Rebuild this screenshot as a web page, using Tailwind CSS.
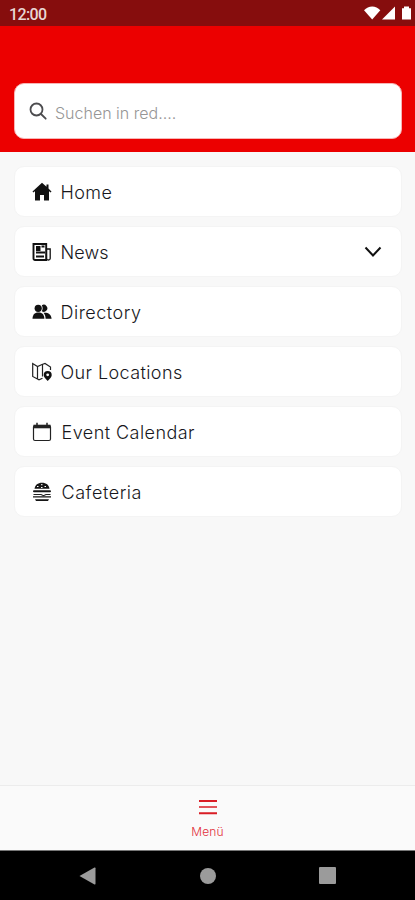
<!DOCTYPE html>
<html lang="de">
<head>
<meta charset="utf-8">
<title>Menü</title>
<script src="https://cdn.jsdelivr.net/npm/@tailwindcss/browser@4"></script>
</head>
<body class="w-[415px] h-[900px] overflow-hidden flex flex-col bg-[#f8f8f8] font-['Inter','Liberation_Sans',sans-serif]">
  <!-- Status bar -->
  <div class="h-[26px] shrink-0 bg-[#860d0d] flex items-center justify-between pl-[9px] pr-[3px]">
    <span class="font-[Roboto,sans-serif] text-[16px] tracking-[-0.6px] leading-none font-medium text-[#e8d6d4] pt-[3px]">12:00</span>
    <svg class="w-[48px] h-[14px]" viewBox="0 0 48 14" fill="#fff">
      <path d="M0 4.2C4.5-.9 12-.9 16.3 4.2L8.2 13.5Z"/>
      <path d="M31 0.500V13.500H18Z"/>
      <path d="M38 2.200h2V.5h5v1.700h2v11.300h-9Z"/>
    </svg>
  </div>
  <!-- Header with search -->
  <header class="h-[126px] shrink-0 bg-[#ec0000] pt-[57px] pl-[14px] pr-[13px]">
    <div class="h-[56px] rounded-[10px] bg-white flex items-center pl-[14px] border border-[#f7b5b5]">
      <svg class="w-[18px] h-[18px] shrink-0" viewBox="0 0 18 18" fill="none" stroke="#4c4c4f" stroke-width="1.8" stroke-linecap="round"><circle cx="7.500" cy="7.500" r="6"/><path d="M12 12l4.700 4.700"/></svg>
      <span class="ml-[8px] pt-[3px] text-[16px] leading-none font-light text-[#969696] whitespace-nowrap">Suchen in red....</span>
    </div>
  </header>
  <!-- Navigation list -->
  <main class="flex-1 pl-[14px] pr-[13px] pt-[14px] flex flex-col gap-[9px] text-[18px] leading-none font-light text-[#17171c] tracking-[0.4px]">
    <div class="h-[51px] rounded-[10px] bg-white border border-[#f4f4f4] flex items-center pl-[17px] pr-[19px]">
      <svg class="w-[20px] h-[20px]" viewBox="0 0 20 20" fill="#111"><path d="M10 .8L.5 9.500l.8 1L3 9.200V18.500h5V13h4v5.500h5V9.200l1.700 1.300.8-1L16.500 6.600V2.500h-2v2.300Z"/></svg>
      <span class="ml-[8.5px] pt-[2px]">Home</span>
    </div>
    <div class="h-[51px] rounded-[10px] bg-white border border-[#f4f4f4] flex items-center pl-[17px] pr-[19px]">
      <svg class="w-[20px] h-[20px]" viewBox="0 0 20 20" fill="none" stroke="#111"><path d="M1.500 2h12.700v16H3a1.500 1.500 0 0 1-1.500-1.500Z" stroke-width="1.900"/><path d="M14.500 7h3.700v9.500c0 2-3.700 2-3.700 0Z" stroke-width="1.300"/><path d="M4 4h4.500v5H4Z" fill="#111" stroke="none"/><path d="M9.500 4.500h3M4 10.500h9M4 14.500h8" stroke-width="1.800"/></svg>
      <span class="ml-[8.5px] pt-[2px] tracking-[0.1px]">News</span>
      <svg class="ml-auto w-[18px] h-[12px]" viewBox="0 0 18 12" fill="none" stroke="#111" stroke-width="2"><path d="M1.500 1.500L9 9.500l7.500-8"/></svg>
    </div>
    <div class="h-[51px] rounded-[10px] bg-white border border-[#f4f4f4] flex items-center pl-[17px] pr-[19px]">
      <svg class="w-[20px] h-[20px]" viewBox="0 0 20 20" fill="#111"><circle cx="6.200" cy="6.300" r="3.600"/><path d="M.5 16.700C.8 12 3.200 10.600 6.500 10.600s5.500 1.400 5.900 6.100Z"/><path d="M9.800 3.200a3.600 3.600 0 1 1 0 6.100c1.100-2 1.100-4.100 0-6.100ZM11.500 10.700c4.900-.3 7.600 1.400 8.100 6h-6c-.1-2.700-.8-4.600-2.100-6Z"/></svg>
      <span class="ml-[8.5px] pt-[2px] tracking-[0.5px]">Directory</span>
    </div>
    <div class="h-[51px] rounded-[10px] bg-white border border-[#f4f4f4] flex items-center pl-[17px] pr-[19px]">
      <svg class="w-[20px] h-[20px]" viewBox="0 0 20 20" fill="none" stroke="#222" stroke-width="1.200"><path d="M10.500 16.200L7 17.800 5.500 17 .7 14.500V1.500L5.500 4.500 10 2.500l3-1 5.500 3.500v3M5.500 4.500v12M10.500 2.500v12"/><path d="M15.700 19c-3-3-4-4.200-4-6a4 4 0 0 1 8 0c0 1.800-1 3-4 6Z" fill="#111" stroke="none"/><circle cx="15.700" cy="12.800" r="1.400" fill="#fff" stroke="none"/></svg>
      <span class="ml-[8.5px] pt-[2px]">Our Locations</span>
    </div>
    <div class="h-[51px] rounded-[10px] bg-white border border-[#f4f4f4] flex items-center pl-[17px] pr-[19px]">
      <svg class="w-[20px] h-[20px]" viewBox="0 0 20 20" fill="none" stroke="#222"><rect x="1.500" y="3.500" width="17" height="15" rx="1.500" stroke-width="1.200"/><path d="M1.500 4.500h17" stroke-width="3.600"/><path d="M5 .8v3M15 .8v3" stroke-width="1.500"/></svg>
      <span class="ml-[9.500px] pt-[2px] tracking-[0.45px]">Event Calendar</span>
    </div>
    <div class="h-[51px] rounded-[10px] bg-white border border-[#f4f4f4] flex items-center pl-[17px] pr-[19px]">
      <svg class="w-[20px] h-[20px]" viewBox="0 0 20 20" fill="#161616"><path d="M2.500 6.800C3 3 5.800.8 10 .8s7 2.200 7.500 6Z"/><path d="M5 4.500h1.500M9 2.700h1.500M12.500 4.500H14M9 5.500h1.500" stroke="#fff"/><rect x="1" y="8.300" width="18" height="2" rx="1"/><path d="M1.500 12.500h7.500l2.500 1.200 2.500-1.200h4.500" fill="none" stroke="#222" stroke-width="1.200"/><path d="M1 14.200h18v1.300H1ZM3 17.200h14l-1 1.800H4Z"/></svg>
      <span class="ml-[9.500px] pt-[2px] tracking-[0.55px]">Cafeteria</span>
    </div>
  </main>
  <!-- Tab bar -->
  <nav class="h-[65px] shrink-0 bg-[#fafafa] border-t border-[#ececec] flex flex-col items-center pt-[13px]">
    <svg class="w-[18px] h-[16px]" viewBox="0 0 18 16" fill="none" stroke-width="2"><path d="M0 2h18M0 14.200h18" stroke="#d91d25"/><path d="M0 8h18" stroke="#e2545a"/></svg>
    <span class="mt-[10px] text-[12px] tracking-[0.2px] leading-[14px] font-light text-[#e2303a]">Menü</span>
  </nav>
  <!-- System navigation -->
  <footer class="h-[50px] shrink-0 bg-black border-t border-[#777] flex items-center justify-between pl-[79px] pr-[79px]">
    <svg class="w-[17px] h-[18px]" viewBox="0 0 17 18" fill="#9b9b9b"><path d="M.5 9L15.500.5q1-.3 1 .7v15.600q0 1-1 .7Z"/></svg>
    <div class="size-[16px] rounded-full bg-[#9b9b9b]"></div>
    <div class="size-[17px] rounded-[1px] bg-[#9b9b9b]"></div>
  </footer>
</body>
</html>
